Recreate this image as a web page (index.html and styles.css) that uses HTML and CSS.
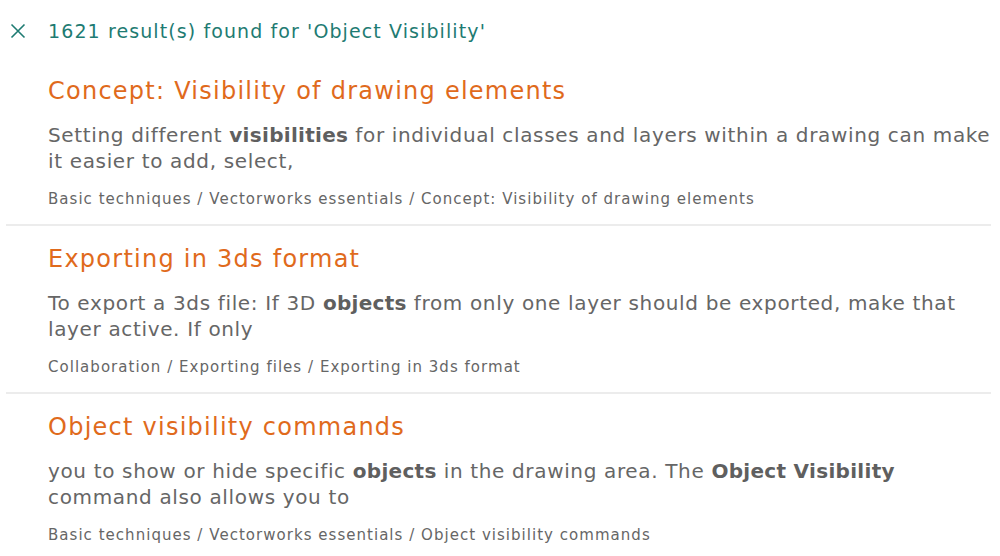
FILE: index.html
```html
<!DOCTYPE html>
<html>
<head>
<meta charset="utf-8">
<link rel="stylesheet" href="styles.css">
</head>
<body>
<div class="page">
  <div class="header">
    <svg class="close" width="16" height="16" viewBox="0 0 16 16"><path d="M1.5 1.5 L14.5 14.5 M14.5 1.5 L1.5 14.5" stroke="#1e7b72" stroke-width="1.6" fill="none"/></svg>
    <span class="count">1621 result(s) found for 'Object Visibility'</span>
  </div>
  <div class="results">
    <div class="result">
      <div class="title">Concept: Visibility of drawing elements</div>
      <div class="snippet">Setting different <b>visibilities</b> for individual classes and layers within a drawing can make it easier to add, select,</div>
      <div class="crumbs">Basic techniques / Vectorworks essentials / Concept: Visibility of drawing elements</div>
    </div>
    <div class="result">
      <div class="title">Exporting in 3ds format</div>
      <div class="snippet">To export a 3ds file: If 3D <b>objects</b> from only one layer should be exported, make that layer active. If only</div>
      <div class="crumbs">Collaboration / Exporting files / Exporting in 3ds format</div>
    </div>
    <div class="result last">
      <div class="title">Object visibility commands</div>
      <div class="snippet">you to show or hide specific <b>objects</b> in the drawing area. The <b>Object Visibility</b> command also allows you to</div>
      <div class="crumbs">Basic techniques / Vectorworks essentials / Object visibility commands</div>
    </div>
  </div>
</div>
</body>
</html>
```
FILE: styles.css
```css
html, body {
  margin: 0;
  padding: 0;
  background: #ffffff;
}
body {
  font-family: Verdana, "DejaVu Sans", sans-serif;
}
.page {
  padding: 0 9px 0 6px;
}
.header {
  display: flex;
  align-items: center;
  height: 54px;
  padding: 4px 0 0 4px;
}
.close {
  flex: none;
  margin-right: 22px;
}
.count {
  color: #1e7b72;
  font-size: 19px;
  letter-spacing: 1.1px;
}
.result {
  padding: 18px 0 14px 42px;
  border-bottom: 2px solid #ececec;
}
.result.last {
  border-bottom: none;
}
.title {
  color: #e06a1c;
  font-size: 24px;
  line-height: 30px;
  letter-spacing: 1.25px;
}
.snippet {
  color: #666666;
  font-size: 20px;
  line-height: 26px;
  margin-top: 16px;
  letter-spacing: 0.65px;
}
.snippet b {
  color: #5f5f5f;
  letter-spacing: 0.3px;
}
.crumbs {
  color: #666666;
  font-size: 15px;
  line-height: 22px;
  margin-top: 14px;
  letter-spacing: 1.03px;
}
```
